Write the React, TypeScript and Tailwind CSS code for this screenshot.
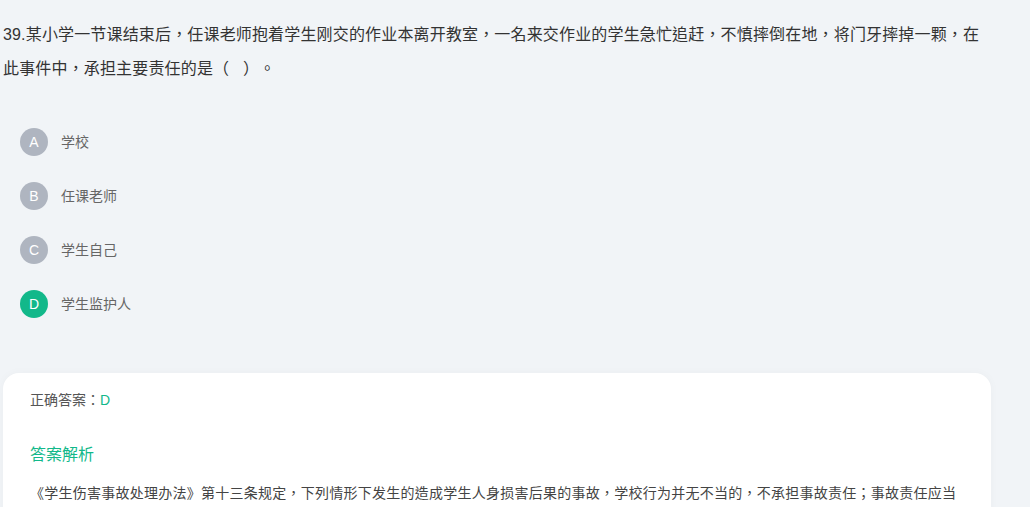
const options = [
  { key: "A", text: "学校" },
  { key: "B", text: "任课老师" },
  { key: "C", text: "学生自己" },
  { key: "D", text: "学生监护人", correct: true },
];

export default function App() {
  return (
    <div className="min-h-screen bg-[#f1f4f7] font-['Liberation_Sans','Noto_Sans_CJK_TC',sans-serif] [text-spacing-trim:space-all]">
      <div className="w-[994px]">
        <p className="pl-[3px] pt-[18px] text-[16px] leading-[34px] tracking-[0.16px] text-[#333]">
          39.某小学一节课结束后，任课老师抱着学生刚交的作业本离开教室，一名来交作业的学生急忙追赶，不慎摔倒在地，将门牙摔掉一颗，在
          <br />
          此事件中，承担主要责任的是（&nbsp;&nbsp;&nbsp;）。
        </p>

        <ul className="mt-[42px] flex flex-col gap-[26px] pl-[20px]">
          {options.map((o) => (
            <li key={o.key} className="flex items-center gap-[13px]">
              <span
                className={
                  "flex h-[28px] w-[28px] items-center justify-center rounded-full text-[14px] text-white " +
                  (o.correct ? "bg-[#12b88a]" : "bg-[#afb5c0]")
                }
              >
                {o.key}
              </span>
              <span className="text-[14px] text-[#666]">{o.text}</span>
            </li>
          ))}
        </ul>

        <div className="ml-[3px] mt-[55px] w-[988px] rounded-[16px] bg-white px-[27px] pt-[17px] pb-6 shadow-[0_0_10px_rgba(0,0,0,0.03)]">
          <p className="text-[14px] leading-[20px] text-[#555]">
            正确答案：<span className="text-[#12b88a]">D</span>
          </p>
          <h3 className="mt-[34px] text-[16px] leading-[22px] text-[#12b88a]">答案解析</h3>
          <p className="mt-[14px] text-[14px] leading-[26px] tracking-[0.25px] text-[#444]">
            《学生伤害事故处理办法》第十三条规定，下列情形下发生的造成学生人身损害后果的事故，学校行为并无不当的，不承担事故责任；事故责任应当按照有关法律法规或者其他有关规定认定：（一）在学生自行上学、放学、返校、离校途中发生的；（二）在学生自行外出或者擅自离校期间发生的；（三）在放学后、节假日或者假期等学校工作时间以外，学生自行滞留学校或者自行到校发生的；（四）其他在学校管理职责范围外发生的。
          </p>
        </div>
      </div>
    </div>
  );
}
